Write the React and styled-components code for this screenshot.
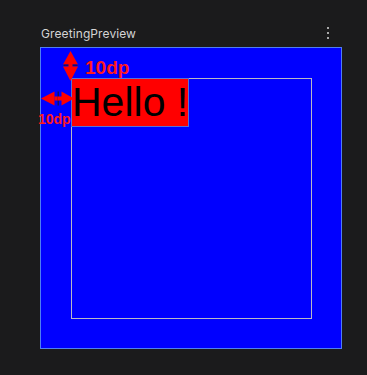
import React from "react";
import styled, { createGlobalStyle } from "styled-components";

const GlobalStyle = createGlobalStyle`
  html, body {
    margin: 0;
    padding: 0;
    background: #1b1b1c;
  }
`;

const Page = styled("div")`
  padding: 24px 0 0 40px;
  min-height: 375px;
  box-sizing: border-box;
  font-family: Inter, "Noto Sans", sans-serif;
`;

const Header = styled("div")`
  width: 302px;
  height: 18px;
  box-sizing: border-box;
  padding: 0 13px 0 1px;
  margin-bottom: 5px;
  display: flex;
  align-items: center;
  justify-content: space-between;
`;

const Title = styled("span")`
  color: #d4d4d4;
  font-size: 12px;
  letter-spacing: 0.1px;
`;

const Dots = styled("div")`
  display: flex;
  flex-direction: column;
  gap: 3px;
`;

const Dot = styled("span")`
  width: 2px;
  height: 2px;
  background: #a8a8a8;
`;

const Preview = styled("div")`
  position: relative;
  width: 302px;
  height: 302px;
  box-sizing: border-box;
  border: 1px solid #4f7ef2;
  background: #0000ff;
  padding: 30px 29px 29px 30px;
`;

const Bounds = styled("div")`
  width: 241px;
  height: 241px;
  box-sizing: border-box;
  box-shadow: inset 0 0 0 1px #b9b9c4;
  display: flex;
  align-items: flex-start;
`;

const Greeting = styled("div")`
  background: #ff0000;
  border: 1px solid #5a6fd6;
  color: #000;
  font-family: "Liberation Sans", Arial, sans-serif;
  font-size: 41px;
  line-height: 47px;
  padding: 0 0 0 0;
  white-space: nowrap;
`;

const Label = styled("span")`
  position: absolute;
  left: ${(p) => p.$left}px;
  top: ${(p) => p.$top}px;
  color: #ff1a1a;
  font-family: "Liberation Sans", Arial, sans-serif;
  font-weight: bold;
  font-size: ${(p) => p.$size}px;
  line-height: ${(p) => p.$size}px;
  white-space: nowrap;
`;

const Arrow = styled("svg")`
  position: absolute;
  left: ${(p) => p.$left}px;
  top: ${(p) => p.$top}px;
`;

const VerticalArrow = () => (
  <Arrow $left={22} $top={2} width="16" height="32" viewBox="0 0 16 32">
    <polygon points="7.5,1 0,14.5 15,14.5" fill="#ff0000" />
    <rect x="0.5" y="14.5" width="14" height="1.5" fill="#10106a" />
    <rect x="5.5" y="12" width="4" height="7" fill="#ff0000" />
    <polygon points="0,16.5 15,16.5 7.5,31" fill="#ff0000" />
  </Arrow>
);

const HorizontalArrow = () => (
  <Arrow $left={0} $top={43} width="34" height="15" viewBox="0 0 34 15">
    <polygon points="0,7.5 13.5,0.5 13.5,14.5" fill="#ff0000" />
    <rect x="13.5" y="5.5" width="8" height="4" fill="#ff0000" />
    <rect x="16.5" y="0.5" width="1.5" height="14" fill="#10106a" />
    <rect x="16.5" y="5.5" width="1.5" height="4" fill="#ff0000" />
    <polygon points="20.5,0.5 20.5,14.5 33,7.5" fill="#ff0000" />
  </Arrow>
);

export default function App() {
  return (
    <Page>
      <GlobalStyle />
      <Header>
        <Title>GreetingPreview</Title>
        <Dots>
          <Dot />
          <Dot />
          <Dot />
        </Dots>
      </Header>
      <Preview>
        <Bounds>
          <Greeting>Hello !</Greeting>
        </Bounds>
        <VerticalArrow />
        <Label $left={44} $top={10} $size={19}>
          10dp
        </Label>
        <HorizontalArrow />
        <Label $left={-3} $top={64} $size={14}>
          10dp
        </Label>
      </Preview>
    </Page>
  );
}
